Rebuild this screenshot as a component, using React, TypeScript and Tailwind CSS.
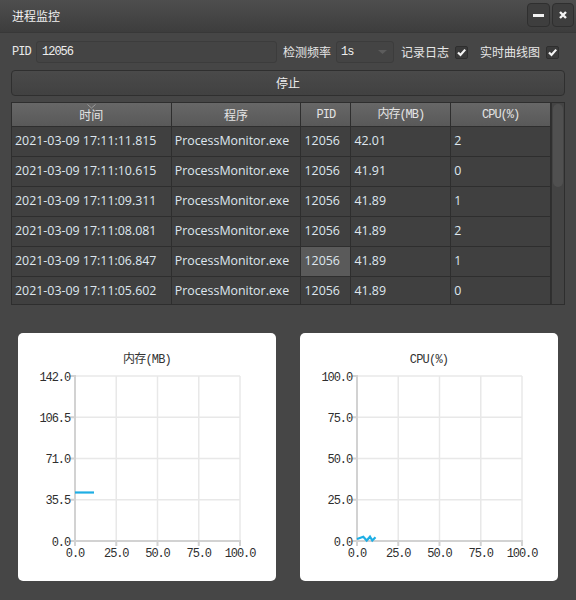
import React from "react";

const rows = [
  ["2021-03-09 17:11:11.815", "ProcessMonitor.exe", "12056", "42.01", "2"],
  ["2021-03-09 17:11:10.615", "ProcessMonitor.exe", "12056", "41.91", "0"],
  ["2021-03-09 17:11:09.311", "ProcessMonitor.exe", "12056", "41.89", "1"],
  ["2021-03-09 17:11:08.081", "ProcessMonitor.exe", "12056", "41.89", "2"],
  ["2021-03-09 17:11:06.847", "ProcessMonitor.exe", "12056", "41.89", "1"],
  ["2021-03-09 17:11:05.602", "ProcessMonitor.exe", "12056", "41.89", "0"],
];

const mono = "font-['Liberation_Mono','Noto_Sans_CJK_SC',monospace] text-[12px] tracking-[-1px]";
const cjk = "font-['Noto_Sans_CJK_SC',sans-serif] text-[12px]";

function Check() {
  return (
    <span className="flex h-[13px] w-[13px] items-center justify-center rounded-[2px] border border-[#2e2e2e] bg-[#3a3a3a]">
      <svg width="11" height="11" viewBox="0 0 11 11">
        <path d="M2 5.5 L4.5 8 L9.2 2.6" fill="none" stroke="#f4f4f4" strokeWidth="2.2" />
      </svg>
    </span>
  );
}

function Chart({ title, yLabels, points }: { title: string; yLabels: string[]; points: string }) {
  const L = 57;
  const T = 43;
  const S = 165;
  const step = S / 4;
  const xLabels = ["0.0", "25.0", "50.0", "75.0", "100.0"];
  const ticks = [0, 1, 2, 3, 4];
  return (
    <div className="h-[248px] w-[258px] rounded-[5px] bg-white">
      <svg width="258" height="248" className="block">
        <text x="129" y="29.5" textAnchor="middle" className="fill-[#333] font-['Liberation_Mono','Noto_Sans_CJK_SC',monospace] text-[12px] tracking-[-0.8px]">
          {title}
        </text>
        {ticks.map((i) => (
          <line key={"h" + i} x1={L} x2={L + S} y1={T + i * step} y2={T + i * step} stroke="#e8e8e8" strokeWidth="1.5" />
        ))}
        {ticks.map((i) => (
          <line key={"v" + i} x1={L + i * step} x2={L + i * step} y1={T} y2={T + S} stroke="#e8e8e8" strokeWidth="1.5" />
        ))}
        {ticks.map((i) => (
          <line key={"yt" + i} x1={L - 5} x2={L} y1={T + i * step} y2={T + i * step} stroke="#d2d2d2" strokeWidth="2" />
        ))}
        {ticks.map((i) => (
          <line key={"xt" + i} x1={L + i * step} x2={L + i * step} y1={T + S} y2={T + S + 5} stroke="#d2d2d2" strokeWidth="2" />
        ))}
        <line x1={L} x2={L} y1={T - 1} y2={T + S + 5} stroke="#d2d2d2" strokeWidth="2" />
        <line x1={L - 5} x2={L + S + 1} y1={T + S} y2={T + S} stroke="#d2d2d2" strokeWidth="2" />
        {yLabels.map((t, i) => (
          <text key={"yl" + i} x={52} y={T + i * step + 4.5} textAnchor="end" className="fill-[#2e2e2e] font-['Liberation_Mono',monospace] text-[12px] tracking-[-1.1px]">
            {t}
          </text>
        ))}
        {xLabels.map((t, i) => (
          <text key={"xl" + i} x={L + i * step} y={224} textAnchor="middle" className="fill-[#2e2e2e] font-['Liberation_Mono',monospace] text-[12px] tracking-[-1.1px]">
            {t}
          </text>
        ))}
        <polyline points={points} fill="none" stroke="#1eaee4" strokeWidth="2.2" />
      </svg>
    </div>
  );
}

export default function App() {
  const cols = ["w-[160px]", "w-[130px]", "w-[50px]", "w-[100px]", "w-[100px]"];
  return (
    <div className="flex h-[600px] w-[576px] flex-col overflow-hidden bg-[#464646] text-[#e6e6e6]">
      {/* Title bar */}
      <div className="flex h-[33px] shrink-0 items-center justify-between border-b border-[#383838] bg-gradient-to-b from-[#4e4e4e] to-[#3d3d3d] pl-3 pr-[2px]">
        <span className={`${cjk} text-[#f0f0f0]`}>进程监控</span>
        <div className="flex gap-[2px] self-start pt-[3px]">
          <button className="flex h-[24px] w-[23px] items-center justify-center rounded-[4px] border border-[#2f2f2f] bg-[#3e3e3e]">
            <span className="h-[3px] w-[11px] bg-[#f2f2f2]" />
          </button>
          <button className="flex h-[24px] w-[22px] items-center justify-center rounded-[4px] border border-[#2f2f2f] bg-[#3e3e3e]">
            <svg width="10" height="10" viewBox="0 0 10 10">
              <path d="M2 2 L8 8 M8 2 L2 8" stroke="#f4f4f4" strokeWidth="2.4" />
            </svg>
          </button>
        </div>
      </div>

      {/* Toolbar */}
      <div className="mt-[8px] flex h-[22px] shrink-0 items-center pl-3">
        <span className={`${mono} w-[18px] text-[#e8e8e8]`}>PID</span>
        <div className={`${mono} ml-[6px] flex h-[22px] w-[241px] items-center rounded-[3px] border border-[#3c3c3c] bg-[#444] pl-[5px] text-[#eee]`}>
          12056
        </div>
        <span className={`${cjk} ml-[6px]`}>检测频率</span>
        <div className="ml-[5px] flex h-[22px] w-[58px] items-center justify-between rounded-[3px] border border-[#3c3c3c] bg-[#444] pl-[4px] pr-[6px]">
          <span className={`${mono} text-[#eee]`}>1s</span>
          <svg width="9" height="4" viewBox="0 0 9 4">
            <path d="M0 0 L9 0 L4.5 4 Z" fill="#5c5c5c" />
          </svg>
        </div>
        <span className={`${cjk} ml-[7px]`}>记录日志</span>
        <span className="ml-[6px]">
          <Check />
        </span>
        <span className={`${cjk} ml-[12px]`}>实时曲线图</span>
        <span className="ml-[6px]">
          <Check />
        </span>
      </div>

      {/* Stop button */}
      <button className={`${cjk} mx-[11px] mt-[7px] flex h-[26px] shrink-0 items-center justify-center rounded-[4px] border border-[#2f2f2f] bg-gradient-to-b from-[#4a4a4a] to-[#414141] text-[#ececec]`}>
        停止
      </button>

      {/* Table */}
      <div className="mx-[11px] mt-[6px] flex h-[203px] shrink-0 overflow-hidden border border-[#2e2e2e] bg-[#404040]">
        <div className="flex w-[540px] flex-col overflow-hidden">
          <div className="flex h-[24px] shrink-0 border-b border-[#2e2e2e] bg-gradient-to-b from-[#676767] to-[#595959] text-[#e4e4e4]">
            <div className={`relative flex ${cols[0]} items-center justify-center border-r border-[#2e2e2e] ${cjk}`}>
              <svg width="9" height="5" viewBox="0 0 9 5" className="absolute left-[75px] top-[1px]">
                <path d="M0.5 0.5 L4.5 4 L8.5 0.5" fill="none" stroke="#9a9a9a" strokeWidth="1" />
              </svg>
              时间
            </div>
            <div className={`flex ${cols[1]} items-center justify-center border-r border-[#2e2e2e] ${cjk}`}>程序</div>
            <div className={`flex ${cols[2]} items-center justify-center border-r border-[#2e2e2e] ${mono}`}>PID</div>
            <div className={`flex ${cols[3]} items-center justify-center border-r border-[#2e2e2e] ${mono}`}>内存(MB)</div>
            <div className={`flex ${cols[4]} items-center justify-center border-r border-[#2e2e2e] ${mono}`}>CPU(%)</div>
          </div>
          {rows.map((r, ri) => (
            <div key={ri} className="flex h-[30px] shrink-0 border-b border-[#2e2e2e] font-['Open_Sans',sans-serif] text-[12.4px] text-[#dfe7ef]">
              {r.map((c, ci) => (
                <div
                  key={ci}
                  className={`flex ${cols[ci]} items-center border-r border-[#2e2e2e] pl-[3px] ${ri === 4 && ci === 2 ? "bg-[#5a5a5a]" : ""}`}
                >
                  {c}
                </div>
              ))}
            </div>
          ))}
        </div>
        <div className="flex w-[13px] justify-center border-l border-[#303030] bg-[#444] pt-[1px]">
          <div className="h-[83px] w-[10px] rounded-[5px] bg-[#505050]" />
        </div>
      </div>

      {/* Charts */}
      <div className="mt-[28px] flex gap-[24px] pl-[18px]">
        <Chart title="内存(MB)" yLabels={["142.0", "106.5", "71.0", "35.5", "0.0"]} points="57,159.5 76,159.5" />
        <Chart
          title="CPU(%)"
          yLabels={["100.0", "75.0", "50.0", "25.0", "0.0"]}
          points="57,206 63.3,203.7 66.7,207.5 70,203.7 72.3,207.5 75.5,204.3"
        />
      </div>
    </div>
  );
}
